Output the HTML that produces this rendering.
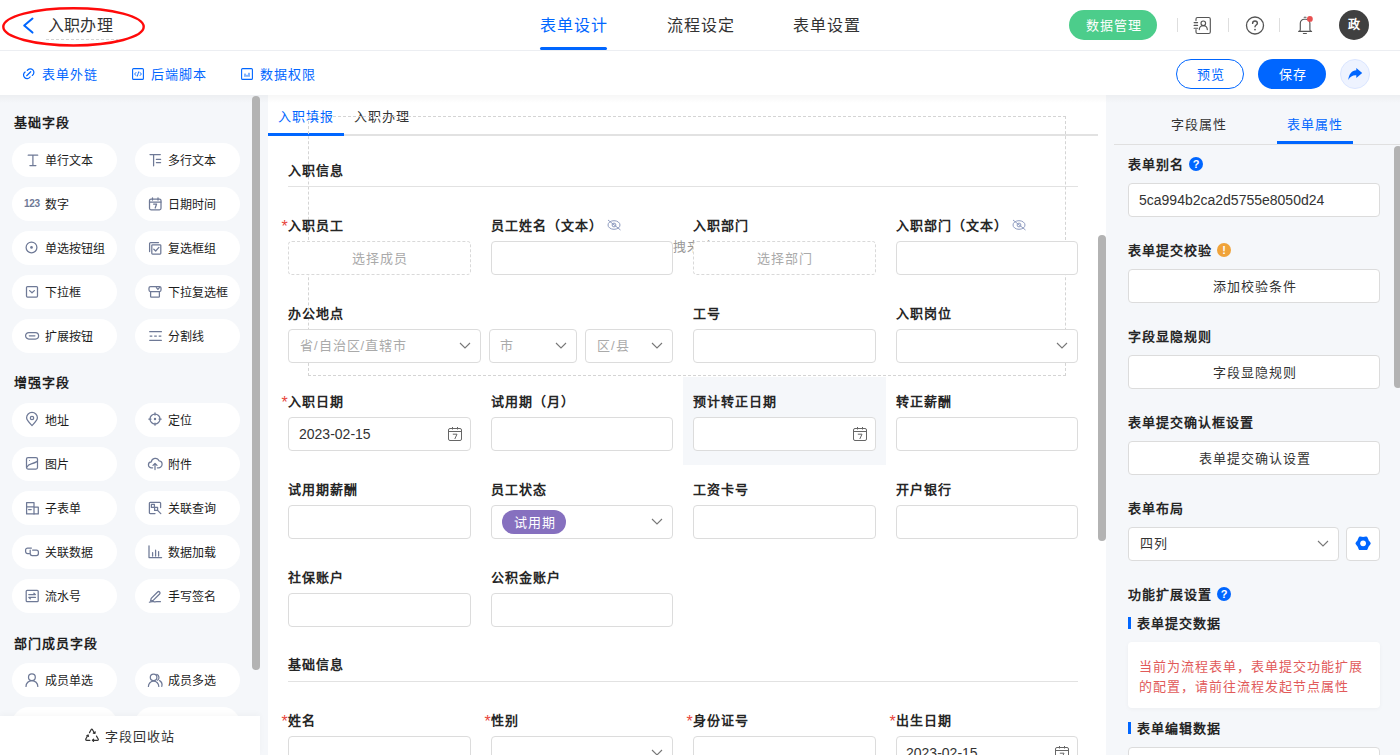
<!DOCTYPE html>
<html lang="zh-CN"><head><meta charset="utf-8"><style>
html,body{margin:0;padding:0;width:1400px;height:755px;overflow:hidden;background:#fff;font-family:"Liberation Sans",sans-serif;}
.a{position:absolute;box-sizing:content-box}
.t{position:absolute;line-height:20px;white-space:nowrap}
.pill{display:flex;align-items:center;justify-content:center;line-height:1}
.cen{display:flex;align-items:center;justify-content:center;line-height:1}
svg.a{overflow:visible}
</style></head><body>
<div class="a" style="left:0px;top:95px;width:1400px;height:660px;background:#f5f7fa"></div>
<div class="a" style="left:268px;top:95px;width:838px;height:660px;background:#fff"></div>
<div class="a" style="left:0px;top:0px;width:1400px;height:50px;background:#fff"></div>
<div class="a" style="left:0px;top:50px;width:1400px;height:1px;background:#eceef2"></div>
<div class="a" style="left:0px;top:51px;width:1400px;height:44px;background:#fff"></div>
<div class="a" style="left:0px;top:95px;width:1400px;height:8px;background:linear-gradient(rgba(0,0,0,0.035),rgba(0,0,0,0))"></div>
<svg class="a" style="left:18px;top:14px" width="20" height="24" viewBox="0 0 20 24"><polyline points="14.5,4.6 6.2,11.6 14.5,18.6" fill="none" stroke="#0066ff" stroke-width="2" stroke-linecap="round" stroke-linejoin="round"/></svg>
<div class="t" style="left:48px;top:16.1px;font-size:16px;color:#333333;letter-spacing:0.2px">入职办理</div>
<div class="a" style="left:46px;top:39px;width:72px;height:1px;background-image:linear-gradient(90deg,#d6d6d6 60%,transparent 60%);background-size:5px 1px"></div>
<svg class="a" style="left:0px;top:0px" width="150" height="50" viewBox="0 0 150 50"><ellipse cx="73.5" cy="26.85" rx="70.2" ry="18.6" fill="none" stroke="#ff0a0a" stroke-width="2.4"/></svg>
<div class="t" style="left:540px;top:16.0px;font-size:16px;color:#0066ff;letter-spacing:1px">表单设计</div>
<div class="t" style="left:667px;top:16.0px;font-size:16px;color:#333333;letter-spacing:1px">流程设定</div>
<div class="t" style="left:793px;top:16.0px;font-size:16px;color:#333333;letter-spacing:1px">表单设置</div>
<div class="a" style="left:540px;top:47px;width:67px;height:3px;background:#0066ff;border-radius:2px"></div>
<div class="a pill" style="left:1069px;top:10px;width:88px;height:30px;background:#4ccd8b;color:#fff;font-size:13px;letter-spacing:1px;text-indent:1px;border-radius:15px">数据管理</div>
<div class="a" style="left:1177px;top:18px;width:1px;height:14px;background:#dedede"></div>
<div class="a" style="left:1228px;top:18px;width:1px;height:14px;background:#dedede"></div>
<div class="a" style="left:1279px;top:18px;width:1px;height:14px;background:#dedede"></div>
<svg class="a" style="left:1190px;top:13px" width="26" height="26" viewBox="0 0 26 26"><path d="M6 7.6V6A1.5 1.5 0 0 1 7.5 4.5H18.8A1.5 1.5 0 0 1 20.3 6V19A1.5 1.5 0 0 1 18.8 20.5H7.5A1.5 1.5 0 0 1 6 19V16.6M4.1 9.6H7.6M4.1 12.4H7.6M4.1 15.2H7.6M9.3 16.6a4 4 0 0 1 8 0" fill="none" stroke="#555" stroke-width="1.15" stroke-linecap="round"/><circle cx="13.3" cy="10.3" r="2.3" fill="none" stroke="#555" stroke-width="1.15"/></svg>
<svg class="a" style="left:1245px;top:16px" width="20" height="20" viewBox="0 0 20 20"><circle cx="10" cy="9.5" r="8.5" fill="none" stroke="#555" stroke-width="1.3"/><path d="M7.6 7.4c0-1.5 1.1-2.4 2.4-2.4s2.4 0.9 2.4 2.2c0 1.8-2.4 1.9-2.4 3.6" fill="none" stroke="#555" stroke-width="1.4" stroke-linecap="round"/><circle cx="10" cy="13.6" r="0.9" fill="#555"/></svg>
<svg class="a" style="left:1292px;top:12px" width="26" height="26" viewBox="0 0 26 26"><path d="M6.6 19.3H19.6M7.2 19.3Q8.3 18.8 8.3 17.4V11.2A4 4 0 0 1 12.3 7.2H13.9A4 4 0 0 1 17.9 11.2V17.4Q17.9 18.8 19 19.3M12.2 5.2H14M11.4 21.5H14.4" fill="none" stroke="#555" stroke-width="1.15" stroke-linecap="round"/><circle cx="17.9" cy="6.9" r="2.9" fill="#e85050"/></svg>
<div class="a pill" style="left:1339px;top:10px;width:30px;height:30px;border-radius:15px;background:#404040;color:#fff;font-size:12px;font-weight:bold">政</div>
<div class="t" style="left:42px;top:64.5px;font-size:13px;letter-spacing:1px;color:#0066ff;">表单外链</div>
<div class="t" style="left:151px;top:64.5px;font-size:13px;letter-spacing:1px;color:#0066ff;">后端脚本</div>
<div class="t" style="left:260px;top:64.5px;font-size:13px;letter-spacing:1px;color:#0066ff;">数据权限</div>
<svg class="a" style="left:20px;top:65px" width="18" height="18" viewBox="0 0 18 18"><path d="M7.3 5.4A3.6 3.6 0 1 1 12.3 10.4M10.1 12A3.6 3.6 0 1 1 5.1 7M6.7 10.7L10.7 6.7" fill="none" stroke="#0066ff" stroke-width="1.25" stroke-linecap="round"/></svg>
<svg class="a" style="left:132px;top:68px" width="12" height="12" viewBox="0 0 12 12"><rect x="0.6" y="0.6" width="10.8" height="10.8" rx="1" fill="none" stroke="#0066ff" stroke-width="1.1"/><path d="M4.2 4.2L2.6 6l1.6 1.8M7.8 4.2L9.4 6 7.8 7.8M6.8 3.4L5.2 8.6" fill="none" stroke="#0066ff" stroke-width="0.9"/></svg>
<svg class="a" style="left:241px;top:68px" width="12" height="12" viewBox="0 0 12 12"><rect x="0.6" y="0.6" width="10.8" height="10.8" rx="1" fill="none" stroke="#0066ff" stroke-width="1.1"/><path d="M4 5.6v3.2M6 6.8v2M8 4.8v4" stroke="#0066ff" stroke-width="1"/></svg>
<div class="a pill" style="left:1176px;top:59px;width:66px;height:28px;border:1px solid #0066ff;border-radius:15px;color:#0066ff;font-size:13px;letter-spacing:1px;text-indent:1px;background:#fff">预览</div>
<div class="a pill" style="left:1258px;top:59px;width:68px;height:30px;border-radius:15px;color:#fff;font-size:13px;letter-spacing:1px;text-indent:1px;background:#0066ff">保存</div>
<div class="a" style="left:1340px;top:59px;width:28px;height:28px;border:1px solid #dbe6ff;border-radius:15px;background:#eef3ff"></div>
<svg class="a" style="left:1340px;top:59px" width="30" height="30" viewBox="0 0 30 30"><path d="M8.3 20.9C8.8 15 12 11.6 16.3 11.3V8.9L22.2 13.9 16.3 18.9V16.3C12.6 16.1 10.2 17.6 8.3 20.9Z" fill="#0066ff"/></svg>
<div class="t" style="left:14px;top:113.25px;font-size:13px;letter-spacing:1px;color:#1f1f1f;font-weight:bold;">基础字段</div>
<div class="t" style="left:14px;top:373.0px;font-size:13px;letter-spacing:1px;color:#1f1f1f;font-weight:bold;">增强字段</div>
<div class="t" style="left:14px;top:633.7px;font-size:13px;letter-spacing:1px;color:#1f1f1f;font-weight:bold;">部门成员字段</div>
<div class="a" style="left:12px;top:143px;width:105px;height:34px;background:#fff;border-radius:17px"></div>
<div class="t" style="left:45px;top:150.7px;font-size:12px;color:#1c1c1c;">单行文本</div>
<div class="a" style="left:135px;top:143px;width:105px;height:34px;background:#fff;border-radius:17px"></div>
<div class="t" style="left:168px;top:150.7px;font-size:12px;color:#1c1c1c;">多行文本</div>
<div class="a" style="left:12px;top:187px;width:105px;height:34px;background:#fff;border-radius:17px"></div>
<div class="t" style="left:45px;top:194.7px;font-size:12px;color:#1c1c1c;">数字</div>
<div class="a" style="left:135px;top:187px;width:105px;height:34px;background:#fff;border-radius:17px"></div>
<div class="t" style="left:168px;top:194.7px;font-size:12px;color:#1c1c1c;">日期时间</div>
<div class="a" style="left:12px;top:231px;width:105px;height:34px;background:#fff;border-radius:17px"></div>
<div class="t" style="left:45px;top:238.7px;font-size:12px;color:#1c1c1c;">单选按钮组</div>
<div class="a" style="left:135px;top:231px;width:105px;height:34px;background:#fff;border-radius:17px"></div>
<div class="t" style="left:168px;top:238.7px;font-size:12px;color:#1c1c1c;">复选框组</div>
<div class="a" style="left:12px;top:275px;width:105px;height:34px;background:#fff;border-radius:17px"></div>
<div class="t" style="left:45px;top:282.7px;font-size:12px;color:#1c1c1c;">下拉框</div>
<div class="a" style="left:135px;top:275px;width:105px;height:34px;background:#fff;border-radius:17px"></div>
<div class="t" style="left:168px;top:282.7px;font-size:12px;color:#1c1c1c;">下拉复选框</div>
<div class="a" style="left:12px;top:319px;width:105px;height:34px;background:#fff;border-radius:17px"></div>
<div class="t" style="left:45px;top:326.7px;font-size:12px;color:#1c1c1c;">扩展按钮</div>
<div class="a" style="left:135px;top:319px;width:105px;height:34px;background:#fff;border-radius:17px"></div>
<div class="t" style="left:168px;top:326.7px;font-size:12px;color:#1c1c1c;">分割线</div>
<div class="a" style="left:12px;top:403px;width:105px;height:34px;background:#fff;border-radius:17px"></div>
<div class="t" style="left:45px;top:410.7px;font-size:12px;color:#1c1c1c;">地址</div>
<div class="a" style="left:135px;top:403px;width:105px;height:34px;background:#fff;border-radius:17px"></div>
<div class="t" style="left:168px;top:410.7px;font-size:12px;color:#1c1c1c;">定位</div>
<div class="a" style="left:12px;top:447px;width:105px;height:34px;background:#fff;border-radius:17px"></div>
<div class="t" style="left:45px;top:454.7px;font-size:12px;color:#1c1c1c;">图片</div>
<div class="a" style="left:135px;top:447px;width:105px;height:34px;background:#fff;border-radius:17px"></div>
<div class="t" style="left:168px;top:454.7px;font-size:12px;color:#1c1c1c;">附件</div>
<div class="a" style="left:12px;top:491px;width:105px;height:34px;background:#fff;border-radius:17px"></div>
<div class="t" style="left:45px;top:498.7px;font-size:12px;color:#1c1c1c;">子表单</div>
<div class="a" style="left:135px;top:491px;width:105px;height:34px;background:#fff;border-radius:17px"></div>
<div class="t" style="left:168px;top:498.7px;font-size:12px;color:#1c1c1c;">关联查询</div>
<div class="a" style="left:12px;top:535px;width:105px;height:34px;background:#fff;border-radius:17px"></div>
<div class="t" style="left:45px;top:542.7px;font-size:12px;color:#1c1c1c;">关联数据</div>
<div class="a" style="left:135px;top:535px;width:105px;height:34px;background:#fff;border-radius:17px"></div>
<div class="t" style="left:168px;top:542.7px;font-size:12px;color:#1c1c1c;">数据加载</div>
<div class="a" style="left:12px;top:579px;width:105px;height:34px;background:#fff;border-radius:17px"></div>
<div class="t" style="left:45px;top:586.7px;font-size:12px;color:#1c1c1c;">流水号</div>
<div class="a" style="left:135px;top:579px;width:105px;height:34px;background:#fff;border-radius:17px"></div>
<div class="t" style="left:168px;top:586.7px;font-size:12px;color:#1c1c1c;">手写签名</div>
<div class="a" style="left:12px;top:663px;width:105px;height:34px;background:#fff;border-radius:17px"></div>
<div class="t" style="left:45px;top:670.7px;font-size:12px;color:#1c1c1c;">成员单选</div>
<div class="a" style="left:135px;top:663px;width:105px;height:34px;background:#fff;border-radius:17px"></div>
<div class="t" style="left:168px;top:670.7px;font-size:12px;color:#1c1c1c;">成员多选</div>
<div class="a" style="left:12px;top:707px;width:105px;height:34px;background:#fff;border-radius:17px"></div>
<div class="a" style="left:135px;top:707px;width:105px;height:34px;background:#fff;border-radius:17px"></div>
<div class="a" style="left:252px;top:96px;width:8px;height:574px;background:#b3b3b3;border-radius:4px"></div>
<div class="a" style="left:0px;top:716px;width:260px;height:39px;background:#fff;box-shadow:0 -2px 6px rgba(0,0,0,0.03)"></div>
<div class="t" style="left:105px;top:727.2px;font-size:13px;letter-spacing:1px;color:#333333;">字段回收站</div>
<div class="t" style="left:278px;top:106.5px;font-size:13px;letter-spacing:1px;color:#0066ff;">入职填报</div>
<div class="t" style="left:354px;top:106.5px;font-size:13px;letter-spacing:1px;color:#333333;">入职办理</div>
<div class="a" style="left:268px;top:134px;width:830px;height:2px;background:#e2e2e2"></div>
<div class="a" style="left:268px;top:133px;width:76px;height:3px;background:#0066ff"></div>
<div class="a" style="left:308px;top:116px;width:756px;height:258px;border:1px dashed #d4d4d4"></div>
<div class="t" style="left:673px;top:237.0px;font-size:13px;letter-spacing:1px;color:#999;">拽来这里</div>
<div class="a" style="left:1098px;top:235px;width:8px;height:306px;background:#b3b3b3;border-radius:4px"></div>
<div class="a" style="left:683px;top:377px;width:203px;height:88px;background:#f5f7fa"></div>
<div class="t" style="left:288px;top:160.9px;font-size:13px;letter-spacing:1px;color:#262626;font-weight:bold;">入职信息</div>
<div class="a" style="left:288px;top:186px;width:790px;height:1px;background:#e2e2e2"></div>
<div class="t" style="left:281.5px;top:216.8px;font-size:16px;color:#e8453c">*</div>
<div class="t" style="left:288px;top:215.5px;font-size:13px;letter-spacing:1px;color:#262626;font-weight:bold;">入职员工</div>
<div class="a cen" style="left:288px;top:241px;width:181px;height:32px;border:1px dashed #d9d9d9;border-radius:4px;background:#fff;color:#aaa;font-size:13px;letter-spacing:1px;text-indent:1px">选择成员</div>
<div class="t" style="left:491px;top:215.5px;font-size:13px;letter-spacing:1px;color:#262626;font-weight:bold;">员工姓名（文本）</div>
<svg class="a" style="left:607px;top:218.6px" width="15" height="12" viewBox="0 0 15 12"><ellipse cx="7" cy="6" rx="6" ry="4.3" fill="none" stroke="#8f9cc0" stroke-width="1"/><circle cx="7" cy="6" r="1.9" fill="none" stroke="#8f9cc0" stroke-width="1"/><path d="M1 1L13.5 11" stroke="#8f9cc0" stroke-width="1"/></svg>
<div class="a" style="left:491px;top:241px;width:180px;height:32px;border:1px solid #dcdcdc;border-radius:4px;background:#fff;"></div>
<div class="t" style="left:693px;top:215.5px;font-size:13px;letter-spacing:1px;color:#262626;font-weight:bold;">入职部门</div>
<div class="a cen" style="left:693px;top:241px;width:181px;height:32px;border:1px dashed #d9d9d9;border-radius:4px;background:#fff;color:#aaa;font-size:13px;letter-spacing:1px;text-indent:1px">选择部门</div>
<div class="t" style="left:896px;top:215.5px;font-size:13px;letter-spacing:1px;color:#262626;font-weight:bold;">入职部门（文本）</div>
<svg class="a" style="left:1012px;top:218.6px" width="15" height="12" viewBox="0 0 15 12"><ellipse cx="7" cy="6" rx="6" ry="4.3" fill="none" stroke="#8f9cc0" stroke-width="1"/><circle cx="7" cy="6" r="1.9" fill="none" stroke="#8f9cc0" stroke-width="1"/><path d="M1 1L13.5 11" stroke="#8f9cc0" stroke-width="1"/></svg>
<div class="a" style="left:896px;top:241px;width:180px;height:32px;border:1px solid #dcdcdc;border-radius:4px;background:#fff;"></div>
<div class="t" style="left:288px;top:303.5px;font-size:13px;letter-spacing:1px;color:#262626;font-weight:bold;">办公地点</div>
<div class="a" style="left:288px;top:329px;width:191px;height:32px;border:1px solid #dcdcdc;border-radius:4px;background:#fff;"></div>
<div class="t" style="left:299px;top:336px;font-size:13px;letter-spacing:1px;text-indent:1px;color:#aaa">省/自治区/直辖市</div>
<svg class="a" style="left:458.7px;top:340px" width="12" height="12" viewBox="0 0 12 12"><polyline points="1,3 6,8 11,3" fill="none" stroke="#777" stroke-width="1.1"/></svg>
<div class="a" style="left:489px;top:329px;width:86px;height:32px;border:1px solid #dcdcdc;border-radius:4px;background:#fff;"></div>
<div class="t" style="left:499px;top:336px;font-size:13px;letter-spacing:1px;text-indent:1px;color:#aaa">市</div>
<svg class="a" style="left:554.7px;top:340px" width="12" height="12" viewBox="0 0 12 12"><polyline points="1,3 6,8 11,3" fill="none" stroke="#777" stroke-width="1.1"/></svg>
<div class="a" style="left:585px;top:329px;width:86px;height:32px;border:1px solid #dcdcdc;border-radius:4px;background:#fff;"></div>
<div class="t" style="left:596px;top:336px;font-size:13px;letter-spacing:1px;text-indent:1px;color:#aaa">区/县</div>
<svg class="a" style="left:650.7px;top:340px" width="12" height="12" viewBox="0 0 12 12"><polyline points="1,3 6,8 11,3" fill="none" stroke="#777" stroke-width="1.1"/></svg>
<div class="t" style="left:693px;top:303.5px;font-size:13px;letter-spacing:1px;color:#262626;font-weight:bold;">工号</div>
<div class="a" style="left:693px;top:329px;width:181px;height:32px;border:1px solid #dcdcdc;border-radius:4px;background:#fff;"></div>
<div class="t" style="left:896px;top:303.5px;font-size:13px;letter-spacing:1px;color:#262626;font-weight:bold;">入职岗位</div>
<div class="a" style="left:896px;top:329px;width:180px;height:32px;border:1px solid #dcdcdc;border-radius:4px;background:#fff;"></div>
<svg class="a" style="left:1055.7px;top:340px" width="12" height="12" viewBox="0 0 12 12"><polyline points="1,3 6,8 11,3" fill="none" stroke="#777" stroke-width="1.1"/></svg>
<div class="t" style="left:281.5px;top:392.8px;font-size:16px;color:#e8453c">*</div>
<div class="t" style="left:288px;top:391.5px;font-size:13px;letter-spacing:1px;color:#262626;font-weight:bold;">入职日期</div>
<div class="a" style="left:288px;top:417px;width:181px;height:32px;border:1px solid #dcdcdc;border-radius:4px;background:#fff;"></div>
<div class="t" style="left:299px;top:424px;font-size:14px;color:#333">2023-02-15</div>
<svg class="a" style="left:448px;top:427px" width="15" height="15" viewBox="0 0 15 15"><rect x="0.5" y="1.5" width="13" height="12" rx="1.5" fill="none" stroke="#666" stroke-width="1"/><path d="M0.5 4.5h13M4.5 0v2.5M9.5 0v2.5" stroke="#666" stroke-width="1"/><path d="M4.8 7.2h4.2L6.8 12" fill="none" stroke="#666" stroke-width="1"/></svg>
<div class="t" style="left:491px;top:391.5px;font-size:13px;letter-spacing:1px;color:#262626;font-weight:bold;">试用期（月）</div>
<div class="a" style="left:491px;top:417px;width:180px;height:32px;border:1px solid #dcdcdc;border-radius:4px;background:#fff;"></div>
<div class="t" style="left:693px;top:391.5px;font-size:13px;letter-spacing:1px;color:#262626;font-weight:bold;">预计转正日期</div>
<div class="a" style="left:693px;top:417px;width:181px;height:32px;border:1px solid #dcdcdc;border-radius:4px;background:#fff;"></div>
<svg class="a" style="left:853px;top:427px" width="15" height="15" viewBox="0 0 15 15"><rect x="0.5" y="1.5" width="13" height="12" rx="1.5" fill="none" stroke="#666" stroke-width="1"/><path d="M0.5 4.5h13M4.5 0v2.5M9.5 0v2.5" stroke="#666" stroke-width="1"/><path d="M4.8 7.2h4.2L6.8 12" fill="none" stroke="#666" stroke-width="1"/></svg>
<div class="t" style="left:896px;top:391.5px;font-size:13px;letter-spacing:1px;color:#262626;font-weight:bold;">转正薪酬</div>
<div class="a" style="left:896px;top:417px;width:180px;height:32px;border:1px solid #dcdcdc;border-radius:4px;background:#fff;"></div>
<div class="t" style="left:288px;top:479.5px;font-size:13px;letter-spacing:1px;color:#262626;font-weight:bold;">试用期薪酬</div>
<div class="a" style="left:288px;top:505px;width:181px;height:32px;border:1px solid #dcdcdc;border-radius:4px;background:#fff;"></div>
<div class="t" style="left:491px;top:479.5px;font-size:13px;letter-spacing:1px;color:#262626;font-weight:bold;">员工状态</div>
<div class="a" style="left:491px;top:505px;width:180px;height:32px;border:1px solid #dcdcdc;border-radius:4px;background:#fff;"></div>
<svg class="a" style="left:650.7px;top:516px" width="12" height="12" viewBox="0 0 12 12"><polyline points="1,3 6,8 11,3" fill="none" stroke="#777" stroke-width="1.1"/></svg>
<div class="a pill" style="left:502px;top:510px;width:64px;height:24px;border-radius:12px;background:#8670bf;color:#fff;font-size:13px;letter-spacing:1px;text-indent:1px">试用期</div>
<div class="t" style="left:693px;top:479.5px;font-size:13px;letter-spacing:1px;color:#262626;font-weight:bold;">工资卡号</div>
<div class="a" style="left:693px;top:505px;width:181px;height:32px;border:1px solid #dcdcdc;border-radius:4px;background:#fff;"></div>
<div class="t" style="left:896px;top:479.5px;font-size:13px;letter-spacing:1px;color:#262626;font-weight:bold;">开户银行</div>
<div class="a" style="left:896px;top:505px;width:180px;height:32px;border:1px solid #dcdcdc;border-radius:4px;background:#fff;"></div>
<div class="t" style="left:288px;top:567.5px;font-size:13px;letter-spacing:1px;color:#262626;font-weight:bold;">社保账户</div>
<div class="a" style="left:288px;top:593px;width:181px;height:32px;border:1px solid #dcdcdc;border-radius:4px;background:#fff;"></div>
<div class="t" style="left:491px;top:567.5px;font-size:13px;letter-spacing:1px;color:#262626;font-weight:bold;">公积金账户</div>
<div class="a" style="left:491px;top:593px;width:180px;height:32px;border:1px solid #dcdcdc;border-radius:4px;background:#fff;"></div>
<div class="t" style="left:288px;top:655.2px;font-size:13px;letter-spacing:1px;color:#262626;font-weight:bold;">基础信息</div>
<div class="a" style="left:288px;top:681px;width:790px;height:1px;background:#e2e2e2"></div>
<div class="t" style="left:281.5px;top:711.8px;font-size:16px;color:#e8453c">*</div>
<div class="t" style="left:288px;top:710.5px;font-size:13px;letter-spacing:1px;color:#262626;font-weight:bold;">姓名</div>
<div class="a" style="left:288px;top:736px;width:181px;height:32px;border:1px solid #dcdcdc;border-radius:4px;background:#fff;"></div>
<div class="t" style="left:484.5px;top:711.8px;font-size:16px;color:#e8453c">*</div>
<div class="t" style="left:491px;top:710.5px;font-size:13px;letter-spacing:1px;color:#262626;font-weight:bold;">性别</div>
<div class="a" style="left:491px;top:736px;width:180px;height:32px;border:1px solid #dcdcdc;border-radius:4px;background:#fff;"></div>
<svg class="a" style="left:650.7px;top:747px" width="12" height="12" viewBox="0 0 12 12"><polyline points="1,3 6,8 11,3" fill="none" stroke="#777" stroke-width="1.1"/></svg>
<div class="t" style="left:686.5px;top:711.8px;font-size:16px;color:#e8453c">*</div>
<div class="t" style="left:693px;top:710.5px;font-size:13px;letter-spacing:1px;color:#262626;font-weight:bold;">身份证号</div>
<div class="a" style="left:693px;top:736px;width:181px;height:32px;border:1px solid #dcdcdc;border-radius:4px;background:#fff;"></div>
<div class="t" style="left:889.5px;top:711.8px;font-size:16px;color:#e8453c">*</div>
<div class="t" style="left:896px;top:710.5px;font-size:13px;letter-spacing:1px;color:#262626;font-weight:bold;">出生日期</div>
<div class="a" style="left:896px;top:736px;width:180px;height:32px;border:1px solid #dcdcdc;border-radius:4px;background:#fff;"></div>
<svg class="a" style="left:1055px;top:746px" width="15" height="15" viewBox="0 0 15 15"><rect x="0.5" y="1.5" width="13" height="12" rx="1.5" fill="none" stroke="#666" stroke-width="1"/><path d="M0.5 4.5h13M4.5 0v2.5M9.5 0v2.5" stroke="#666" stroke-width="1"/><path d="M4.8 7.2h4.2L6.8 12" fill="none" stroke="#666" stroke-width="1"/></svg>
<div class="t" style="left:906px;top:743px;font-size:14px;color:#333">2023-02-15</div>
<div class="t" style="left:1171px;top:114.75px;font-size:13px;letter-spacing:1px;color:#333333;">字段属性</div>
<div class="t" style="left:1287px;top:114.75px;font-size:13px;letter-spacing:1px;color:#0066ff;">表单属性</div>
<div class="a" style="left:1114px;top:144px;width:286px;height:1px;background:#e0e0e0"></div>
<div class="a" style="left:1277px;top:141px;width:76px;height:3px;background:#0066ff"></div>
<div class="a" style="left:1394px;top:146px;width:8px;height:242px;background:#b3b3b3;border-radius:4px"></div>
<div class="t" style="left:1128px;top:154.5px;font-size:13px;letter-spacing:1px;color:#262626;font-weight:bold;">表单别名</div>
<div class="a pill" style="left:1189px;top:157px;width:14px;height:14px;border-radius:7px;background:#0066ff;color:#fff;font-size:11px;font-weight:bold">?</div>
<div class="a" style="left:1128px;top:183px;width:250px;height:32px;border:1px solid #dcdcdc;border-radius:4px;background:#fff"></div>
<div class="t" style="left:1139px;top:190px;font-size:14px;color:#333">5ca994b2ca2d5755e8050d24</div>
<div class="t" style="left:1128px;top:240.5px;font-size:13px;letter-spacing:1px;color:#262626;font-weight:bold;">表单提交校验</div>
<div class="a pill" style="left:1217px;top:243px;width:14px;height:14px;border-radius:7px;background:#f0a33a;color:#fff;font-size:11px;font-weight:bold">!</div>
<div class="a cen" style="left:1128px;top:269px;width:250px;height:32px;border:1px solid #dcdcdc;border-radius:4px;background:#fff;color:#333;font-size:13px;letter-spacing:1px;text-indent:1px">添加校验条件</div>
<div class="t" style="left:1128px;top:326.5px;font-size:13px;letter-spacing:1px;color:#262626;font-weight:bold;">字段显隐规则</div>
<div class="a cen" style="left:1128px;top:355px;width:250px;height:32px;border:1px solid #dcdcdc;border-radius:4px;background:#fff;color:#333;font-size:13px;letter-spacing:1px;text-indent:1px">字段显隐规则</div>
<div class="t" style="left:1128px;top:412.5px;font-size:13px;letter-spacing:1px;color:#262626;font-weight:bold;">表单提交确认框设置</div>
<div class="a cen" style="left:1128px;top:441px;width:250px;height:32px;border:1px solid #dcdcdc;border-radius:4px;background:#fff;color:#333;font-size:13px;letter-spacing:1px;text-indent:1px">表单提交确认设置</div>
<div class="t" style="left:1128px;top:498.5px;font-size:13px;letter-spacing:1px;color:#262626;font-weight:bold;">表单布局</div>
<div class="a" style="left:1128px;top:527px;width:209px;height:32px;border:1px solid #dcdcdc;border-radius:4px;background:#fff"></div>
<div class="t" style="left:1139px;top:534px;font-size:13px;letter-spacing:1px;text-indent:1px;color:#333">四列</div>
<svg class="a" style="left:1316.7px;top:538px" width="12" height="12" viewBox="0 0 12 12"><polyline points="1,3 6,8 11,3" fill="none" stroke="#777" stroke-width="1.1"/></svg>
<div class="a" style="left:1346px;top:527px;width:32px;height:32px;border:1px solid #dcdcdc;border-radius:4px;background:#fff"></div>
<svg class="a" style="left:1350px;top:531px" width="26" height="26" viewBox="0 0 26 26"><polygon points="19.20,12.30 17.34,14.75 16.15,17.58 13.10,17.20 10.05,17.58 8.86,14.75 7.00,12.30 8.86,9.85 10.05,7.02 13.10,7.40 16.15,7.02 17.34,9.85" fill="#0066ff" stroke="#0066ff" stroke-width="3" stroke-linejoin="round"/><circle cx="13.1" cy="12.3" r="2.9" fill="#fff"/></svg>
<div class="t" style="left:1128px;top:584.5px;font-size:13px;letter-spacing:1px;color:#262626;font-weight:bold;">功能扩展设置</div>
<div class="a pill" style="left:1217px;top:587px;width:14px;height:14px;border-radius:7px;background:#0066ff;color:#fff;font-size:11px;font-weight:bold">?</div>
<div class="a" style="left:1128px;top:617px;width:3px;height:12px;background:#0066ff"></div>
<div class="t" style="left:1137px;top:613.5px;font-size:13px;letter-spacing:1px;color:#262626;font-weight:bold;">表单提交数据</div>
<div class="a" style="left:1128px;top:642px;width:252px;height:66px;background:#fff;border-radius:4px;box-shadow:0 1px 4px rgba(0,0,0,0.04)"></div>
<div class="a" style="left:1139px;top:657px;width:236px;font-size:13px;letter-spacing:1px;line-height:20px;color:#e15a5a">当前为流程表单，表单提交功能扩展的配置，请前往流程发起节点属性</div>
<div class="a" style="left:1128px;top:722px;width:3px;height:12px;background:#0066ff"></div>
<div class="t" style="left:1137px;top:718.5px;font-size:13px;letter-spacing:1px;color:#262626;font-weight:bold;">表单编辑数据</div>
<div class="a" style="left:1128px;top:747px;width:250px;height:32px;border:1px solid #dcdcdc;border-radius:4px;background:#fff"></div>
<svg class="a" style="left:25px;top:153px" width="14" height="14" viewBox="0 0 14 14"><path d="M3.2 2.2H12.7M7.9 2.2V12.5M4.9 12.5H10.9" fill="none" stroke="#6e7996" stroke-width="1.25" stroke-linecap="round" stroke-linejoin="round"/></svg>
<div class="t" style="left:24px;top:193.5px;font-size:10px;font-weight:bold;color:#6e7996;letter-spacing:-0.3px">123</div>
<svg class="a" style="left:25px;top:241px" width="14" height="14" viewBox="0 0 14 14"><circle cx="6.5" cy="6.4" r="5.4" fill="none" stroke="#6e7996" stroke-width="1.25" stroke-linecap="round" stroke-linejoin="round"/><circle cx="6.5" cy="6.4" r="1.3" fill="#6e7996"/></svg>
<svg class="a" style="left:25px;top:285px" width="14" height="14" viewBox="0 0 14 14"><rect x="1.5" y="1.5" width="11" height="10.5" rx="1" fill="none" stroke="#6e7996" stroke-width="1.25" stroke-linecap="round" stroke-linejoin="round"/><path d="M4.6 5.6L7 7.8 9.4 5.6" fill="none" stroke="#6e7996" stroke-width="1.25" stroke-linecap="round" stroke-linejoin="round"/></svg>
<svg class="a" style="left:25px;top:329px" width="14" height="14" viewBox="0 0 14 14"><rect x="0.6" y="3.6" width="13" height="6.4" rx="3.2" fill="none" stroke="#6e7996" stroke-width="1.25" stroke-linecap="round" stroke-linejoin="round"/><path d="M4.3 6.8H9.9" fill="none" stroke="#6e7996" stroke-width="1.25" stroke-linecap="round" stroke-linejoin="round"/></svg>
<svg class="a" style="left:148px;top:153px" width="14" height="14" viewBox="0 0 14 14"><path d="M2 1.6H12.3M5.6 1.6V12.8M8.4 6.4H12.6M8.4 9.6H12.6" fill="none" stroke="#6e7996" stroke-width="1.25" stroke-linecap="round" stroke-linejoin="round"/></svg>
<svg class="a" style="left:148px;top:197px" width="14" height="14" viewBox="0 0 14 14"><rect x="1.5" y="2" width="11.5" height="10.8" rx="1.5" fill="none" stroke="#6e7996" stroke-width="1.25" stroke-linecap="round" stroke-linejoin="round"/><path d="M1.5 5H13M4.5 0.8V3M10 0.8V3M5.6 7H8.6L7.2 11" fill="none" stroke="#6e7996" stroke-width="1.25" stroke-linecap="round" stroke-linejoin="round"/></svg>
<svg class="a" style="left:148px;top:241px" width="14" height="14" viewBox="0 0 14 14"><path d="M1.6 10.5V2.6a1 1 0 0 1 1-1H10.5" fill="none" stroke="#6e7996" stroke-width="1.25" stroke-linecap="round" stroke-linejoin="round"/><rect x="3.8" y="3.8" width="9" height="9.2" rx="0.8" fill="none" stroke="#6e7996" stroke-width="1.25" stroke-linecap="round" stroke-linejoin="round"/><path d="M5.8 8.2L7.7 10 10.9 6.4" fill="none" stroke="#6e7996" stroke-width="1.25" stroke-linecap="round" stroke-linejoin="round"/></svg>
<svg class="a" style="left:148px;top:285px" width="14" height="14" viewBox="0 0 14 14"><rect x="1" y="1.6" width="12" height="5" rx="1.5" fill="none" stroke="#6e7996" stroke-width="1.25" stroke-linecap="round" stroke-linejoin="round"/><path d="M2.6 6.6V11.4a0.8 0.8 0 0 0 0.8 0.8H10.6a0.8 0.8 0 0 0 0.8-0.8V6.6" fill="none" stroke="#6e7996" stroke-width="1.25" stroke-linecap="round" stroke-linejoin="round"/><path d="M8.4 2.6L9.9 4.4 11.4 2.6" fill="none" stroke="#6e7996" stroke-width="1.25" stroke-linecap="round" stroke-linejoin="round"/></svg>
<svg class="a" style="left:148px;top:329px" width="14" height="14" viewBox="0 0 14 14"><path d="M1.7 2.7H13.4M1.7 11.3H13.4" fill="none" stroke="#6e7996" stroke-width="1.25" stroke-linecap="round" stroke-linejoin="round"/><path d="M1.7 7.1H13.4" fill="none" stroke="#6e7996" stroke-width="1.2" stroke-dasharray="2.6 1.9"/></svg>
<svg class="a" style="left:25px;top:412px" width="14" height="14" viewBox="0 0 14 14"><path d="M7 13.6C4.5 11 1.6 8.4 1.6 5.8a5.4 5.4 0 0 1 10.8 0c0 2.6-2.9 5.2-5.4 7.8z" fill="none" stroke="#6e7996" stroke-width="1.25" stroke-linecap="round" stroke-linejoin="round"/><circle cx="7" cy="6" r="1.7" fill="none" stroke="#6e7996" stroke-width="1.25" stroke-linecap="round" stroke-linejoin="round"/></svg>
<svg class="a" style="left:25px;top:456px" width="14" height="14" viewBox="0 0 14 14"><rect x="1.5" y="1.5" width="11" height="11.5" rx="1.5" fill="none" stroke="#6e7996" stroke-width="1.25" stroke-linecap="round" stroke-linejoin="round"/><path d="M2 11C4 7 6 9 12.4 5.4" fill="none" stroke="#6e7996" stroke-width="1.25" stroke-linecap="round" stroke-linejoin="round"/><circle cx="4.5" cy="4.6" r="0.5" fill="#6e7996"/></svg>
<svg class="a" style="left:25px;top:501px" width="14" height="14" viewBox="0 0 14 14"><path d="M9 12.9H1.6V1.5H9V5.9M1.6 5.9H9M3.6 8.5H6.2" fill="none" stroke="#6e7996" stroke-width="1.25" stroke-linecap="round" stroke-linejoin="round"/><rect x="9" y="6.2" width="4.3" height="6.7" fill="none" stroke="#6e7996" stroke-width="1.25" stroke-linecap="round" stroke-linejoin="round"/></svg>
<svg class="a" style="left:25px;top:545px" width="14" height="14" viewBox="0 0 14 14"><path d="M6.4 3H2.6a2 2 0 0 0-2 2v1.6a2 2 0 0 0 2 2H4.4" fill="none" stroke="#6e7996" stroke-width="1.25" stroke-linecap="round" stroke-linejoin="round"/><path d="M5.2 5.2V8.6a2 2 0 0 0 2 2h4.2a2 2 0 0 0 2-2V7a2 2 0 0 0-2-2H7.6" fill="none" stroke="#6e7996" stroke-width="1.25" stroke-linecap="round" stroke-linejoin="round"/></svg>
<svg class="a" style="left:25px;top:589px" width="14" height="14" viewBox="0 0 14 14"><rect x="1.2" y="1.3" width="12" height="11.4" rx="1" fill="none" stroke="#6e7996" stroke-width="1.25" stroke-linecap="round" stroke-linejoin="round"/><path d="M3.8 5.6H10.4L8.9 4.2M10.4 8.4H3.8L5.3 9.8" fill="none" stroke="#6e7996" stroke-width="1.25" stroke-linecap="round" stroke-linejoin="round"/></svg>
<svg class="a" style="left:148px;top:412px" width="14" height="14" viewBox="0 0 14 14"><circle cx="7" cy="7" r="5" fill="none" stroke="#6e7996" stroke-width="1.25" stroke-linecap="round" stroke-linejoin="round"/><path d="M7 0.8V3M7 11V13.2M0.8 7H3M11 7H13.2" fill="none" stroke="#6e7996" stroke-width="1.25" stroke-linecap="round" stroke-linejoin="round"/><circle cx="7" cy="7" r="1.2" fill="#6e7996"/></svg>
<svg class="a" style="left:148px;top:456px" width="14" height="14" viewBox="0 0 14 14"><path d="M4.6 11.8H3.6a3 3 0 0 1-0.3-6A4 4 0 0 1 11 4.9a3.3 3.3 0 0 1-0.8 6.9H9.4" fill="none" stroke="#6e7996" stroke-width="1.25" stroke-linecap="round" stroke-linejoin="round"/><path d="M7 13.6V7.6M5 9.4L7 7.4 9 9.4" fill="none" stroke="#6e7996" stroke-width="1.25" stroke-linecap="round" stroke-linejoin="round"/></svg>
<svg class="a" style="left:148px;top:501px" width="14" height="14" viewBox="0 0 14 14"><path d="M12.6 6.5V2.2a0.8 0.8 0 0 0-0.8-0.8H2.2a0.8 0.8 0 0 0-0.8 0.8V11.8a0.8 0.8 0 0 0 0.8 0.8H7" fill="none" stroke="#6e7996" stroke-width="1.25" stroke-linecap="round" stroke-linejoin="round"/><rect x="3.4" y="3.4" width="3" height="3" fill="none" stroke="#6e7996" stroke-width="1.25" stroke-linecap="round" stroke-linejoin="round"/><rect x="6.6" y="6.4" width="3" height="3" fill="none" stroke="#6e7996" stroke-width="1.25" stroke-linecap="round" stroke-linejoin="round"/><path d="M9.6 9.4L12.8 12.6" fill="none" stroke="#6e7996" stroke-width="1.25" stroke-linecap="round" stroke-linejoin="round"/></svg>
<svg class="a" style="left:148px;top:545px" width="14" height="14" viewBox="0 0 14 14"><path d="M1 0.8V12.6H13.6M4.6 11V7.5M7.6 11V5.2M10.6 11V6.6" fill="none" stroke="#6e7996" stroke-width="1.25" stroke-linecap="round" stroke-linejoin="round"/></svg>
<svg class="a" style="left:148px;top:589px" width="14" height="14" viewBox="0 0 14 14"><path d="M3.2 9.4L9.6 3a1.4 1.4 0 0 1 2 2L5.2 11.4 2.6 12z" fill="none" stroke="#6e7996" stroke-width="1.25" stroke-linecap="round" stroke-linejoin="round"/><path d="M1.4 13.2c2-1.2 3.6-0.6 5-0.4s3.2-0.4 6-0.2" fill="none" stroke="#6e7996" stroke-width="1.25" stroke-linecap="round" stroke-linejoin="round"/></svg>
<svg class="a" style="left:25px;top:673px" width="14" height="14" viewBox="0 0 14 14"><circle cx="6.9" cy="4.3" r="3.4" fill="none" stroke="#6e7996" stroke-width="1.25" stroke-linecap="round" stroke-linejoin="round"/><path d="M1 13.4a5.9 5.9 0 0 1 11.8 0" fill="none" stroke="#6e7996" stroke-width="1.25" stroke-linecap="round" stroke-linejoin="round"/></svg>
<svg class="a" style="left:148px;top:673px" width="14" height="14" viewBox="0 0 14 14"><circle cx="5.6" cy="4.3" r="3.3" fill="none" stroke="#6e7996" stroke-width="1.25" stroke-linecap="round" stroke-linejoin="round"/><path d="M0.4 13.4a5.2 5.2 0 0 1 10.4 0M8.8 1.4a3.3 3.3 0 0 1 0.8 5.8M11.6 7.6a5.2 5.2 0 0 1 2.2 5.8" fill="none" stroke="#6e7996" stroke-width="1.25" stroke-linecap="round" stroke-linejoin="round"/></svg>
<svg class="a" style="left:80px;top:725px" width="24" height="24" viewBox="0 0 24 24"><path d="M9.5 7.6L11.1 4.7Q11.8 3.7 12.5 4.7L14.6 8.2M13.3 8.1L14.9 8.5 15.2 6.8M7.9 10.2L5.9 13.8Q5.3 15.3 6.8 15.3H9.9M6.8 10.7L8.1 9.9 8.5 11.3M16.5 11.1L18.2 14Q18.8 15.3 17.3 15.3H12.4M13.6 14.2L12.4 15.3 13.6 16.4" fill="none" stroke="#333" stroke-width="1.2" stroke-linecap="round" stroke-linejoin="round"/></svg>
</body></html>
